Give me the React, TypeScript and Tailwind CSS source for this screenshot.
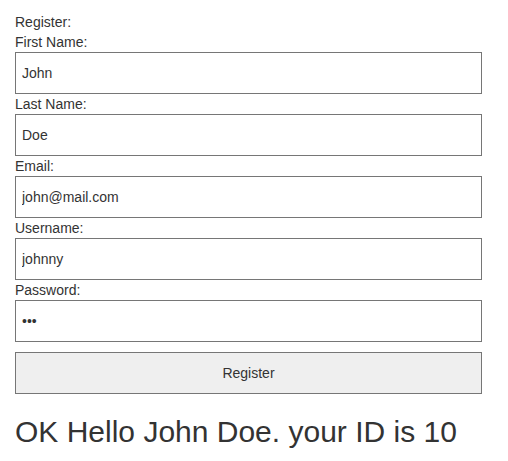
import { useState } from "react";

const fields = [
  { label: "First Name:", name: "first", type: "text", value: "John" },
  { label: "Last Name:", name: "last", type: "text", value: "Doe" },
  { label: "Email:", name: "email", type: "text", value: "john@mail.com" },
  { label: "Username:", name: "username", type: "text", value: "johnny" },
  { label: "Password:", name: "password", type: "password", value: "abc" },
];

export default function App() {
  const [values, setValues] = useState<Record<string, string>>(
    Object.fromEntries(fields.map((f) => [f.name, f.value]))
  );

  return (
    <div className="min-h-screen bg-white px-[15px] pt-3 text-[#333] font-['Liberation_Sans',Arial,sans-serif]">
      <form className="w-[467px]" onSubmit={(e) => e.preventDefault()}>
        <div className="text-sm leading-5">Register:</div>
        {fields.map((f) => (
          <div key={f.name}>
            <label className="block text-sm leading-5">{f.label}</label>
            <input
              type={f.type}
              value={values[f.name]}
              onChange={(e) => setValues({ ...values, [f.name]: e.target.value })}
              className="block w-full h-[42px] border border-[#767676] bg-white px-[6px] text-sm text-[#333] outline-none"
            />
          </div>
        ))}
        <button
          type="submit"
          className="mt-[10px] block w-full h-[42px] border border-[#767676] bg-[#efefef] text-sm text-[#333]"
        >
          Register
        </button>
      </form>
      <div className="mt-[21px] text-[30px] leading-[34px]">OK Hello John Doe. your ID is 10</div>
    </div>
  );
}
